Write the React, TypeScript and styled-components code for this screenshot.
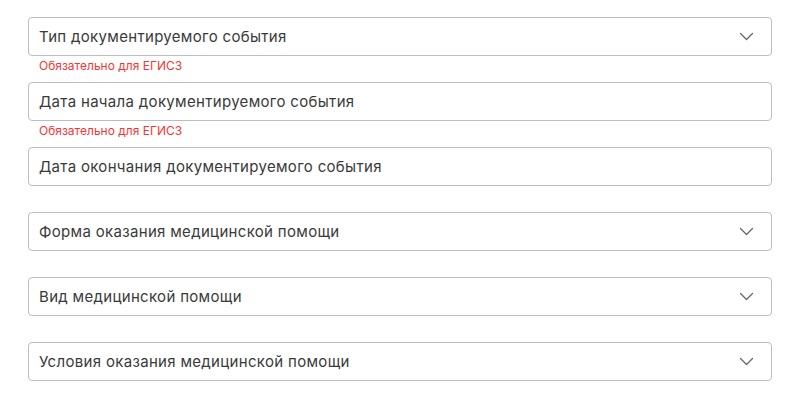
import React from "react";
import styled, { createGlobalStyle } from "styled-components";

const Global = createGlobalStyle`
  html, body { margin: 0; padding: 0; background: #ffffff; }
  body { font-family: Inter, "Noto Sans", sans-serif; }
`;

const Form = styled.div`
  display: flex;
  flex-direction: column;
  padding: 17px 28px 0 28px;
`;

const Field = styled.div`
  display: flex;
  flex-direction: column;
  height: 65px;
`;

const Box = styled.div`
  box-sizing: border-box;
  height: 39px;
  border: 1px solid #bdbdbd;
  border-radius: 4px;
  display: flex;
  align-items: center;
  justify-content: space-between;
  padding: 0 17px 0 10px;
  background: #fff;
`;

const Label = styled.span`
  font-size: 15px;
  color: #3a3a3a;
  letter-spacing: 0.32px;
`;

const Helper = styled.div`
  font-size: 12px;
  line-height: 14px;
  color: #f53535;
  margin: 3px 0 0 11px;
`;

const Chevron = () => (
  <svg width="15" height="9" viewBox="0 0 15 9" fill="none">
    <path d="M1.5 1.5 L7.5 7.5 L13.5 1.5" stroke="#666" strokeWidth="1.3" strokeLinecap="round" strokeLinejoin="round" />
  </svg>
);

type Item = { label: string; select?: boolean; required?: boolean };

const items: Item[] = [
  { label: "Тип документируемого события", select: true, required: true },
  { label: "Дата начала документируемого события", required: true },
  { label: "Дата окончания документируемого события" },
  { label: "Форма оказания медицинской помощи", select: true },
  { label: "Вид медицинской помощи", select: true },
  { label: "Условия оказания медицинской помощи", select: true },
];

export default function App() {
  return (
    <>
      <Global />
      <Form>
        {items.map((it) => (
          <Field key={it.label}>
            <Box>
              <Label>{it.label}</Label>
              {it.select && <Chevron />}
            </Box>
            {it.required && <Helper>Обязательно для ЕГИСЗ</Helper>}
          </Field>
        ))}
      </Form>
    </>
  );
}
